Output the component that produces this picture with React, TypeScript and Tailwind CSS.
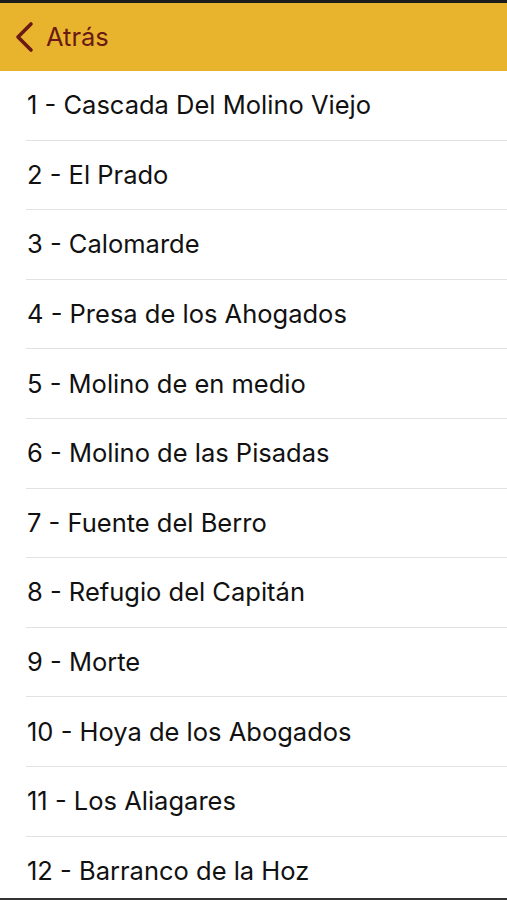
const ITEMS = [
  "1 - Cascada Del Molino Viejo",
  "2 - El Prado",
  "3 - Calomarde",
  "4 - Presa de los Ahogados",
  "5 - Molino de en medio",
  "6 - Molino de las Pisadas",
  "7 - Fuente del Berro",
  "8 - Refugio del Capitán",
  "9 - Morte",
  "10 - Hoya de los Abogados",
  "11 - Los Aliagares",
  "12 - Barranco de la Hoz",
]

function App() {
  return (
    <div className="flex h-[900px] w-[507px] flex-col overflow-hidden bg-white font-['Inter',sans-serif]">
      <div className="h-[3px] shrink-0 bg-[#1c1c1c]" />
      <header className="flex h-[68px] shrink-0 items-center gap-[11px] bg-[#e8b42d] pl-[13px] text-[#6a1a14]">
        <svg width="22" height="32" viewBox="0 0 22 32" fill="none" aria-hidden="true">
          <path d="M18 3 L5 16 L18 29" stroke="currentColor" strokeWidth="3.6" strokeLinecap="round" strokeLinejoin="round" />
        </svg>
        <span className="text-[25.5px] leading-none">Atrás</span>
      </header>
      <ul className="min-h-0 flex-1 overflow-hidden">
        {ITEMS.map((item, i) => (
          <li key={item} className="pl-[26px]">
            <div
              className={
                "flex h-[69.6px] items-center pl-px text-[25.5px] text-[#111]" +
                (i < ITEMS.length - 1 ? " border-b border-[#e2e2e2]" : "")
              }
            >
              {item}
            </div>
          </li>
        ))}
      </ul>
      <div className="h-[2px] shrink-0 bg-[#333]" />
    </div>
  )
}

export default App
